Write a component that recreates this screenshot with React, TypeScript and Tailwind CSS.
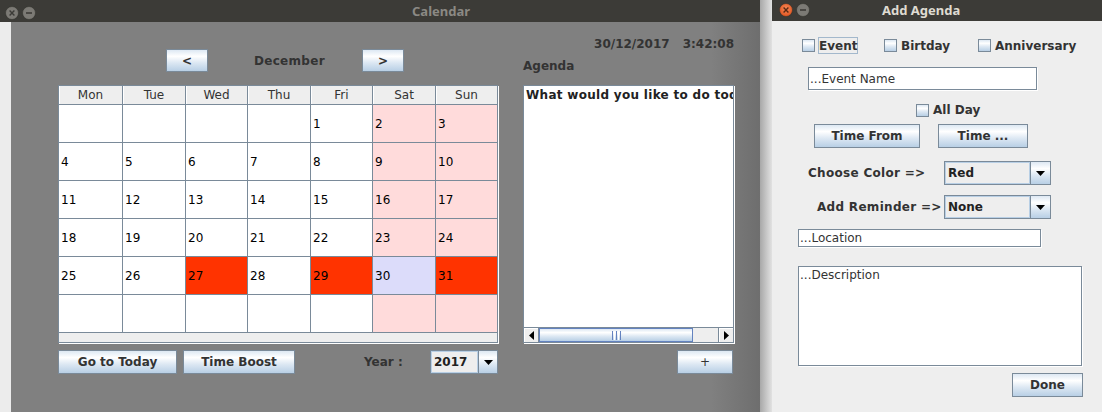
import React from "react";

function Btn({ className = "", children }: { className?: string; children: React.ReactNode }) {
  return (
    <div
      className={`flex shrink-0 items-center justify-center border border-[#7a8a99] bg-[linear-gradient(to_bottom,#dde8f3_0%,#ffffff_30%,#dde8f3_60%,#b8cfe5_100%)] text-[12px] leading-[14px] text-[#333333] ${className}`}
    >
      {children}
    </div>
  );
}

function Box() {
  return (
    <div className="h-[13px] w-[13px] shrink-0 border border-[#7a8a99] bg-[linear-gradient(to_bottom,#dde8f3_0%,#ffffff_30%,#dde8f3_60%,#b8cfe5_100%)]" />
  );
}

function DownArrow() {
  return (
    <svg width="9" height="5" viewBox="0 0 9 5">
      <polygon points="0,0 9,0 4.5,5" fill="#000000" />
    </svg>
  );
}

function Combo({ value, className = "", arrowW = "w-[19px]" }: { value: string; className?: string; arrowW?: string }) {
  return (
    <div className={`flex shrink-0 border border-[#7a8a99] ${className}`}>
      <div className="flex flex-1 items-center border border-[#b8cfe5] bg-[#eeeeee] pl-[2px] text-[12px] font-bold leading-[14px] text-[#222222]">
        {value}
      </div>
      <div
        className={`flex items-center justify-center border-l border-[#7a8a99] bg-[linear-gradient(to_bottom,#dde8f3_0%,#ffffff_30%,#dde8f3_60%,#b8cfe5_100%)] ${arrowW}`}
      >
        <DownArrow />
      </div>
    </div>
  );
}

function WinBtn({ kind, orange }: { kind: "close" | "min"; orange?: boolean }) {
  return (
    <svg width="14" height="14" viewBox="0 0 14 14" className="shrink-0">
      <defs>
        <radialGradient id="og" cx="50%" cy="40%" r="60%">
          <stop offset="0%" stopColor="#f58a5a" />
          <stop offset="100%" stopColor="#e2541f" />
        </radialGradient>
      </defs>
      <circle cx="7" cy="7" r="6.5" fill={orange ? "url(#og)" : "#7c7a75"} stroke="#33322e" strokeWidth="0.6" />
      {kind === "close" ? (
        <path d="M4.6 4.6 L9.4 9.4 M9.4 4.6 L4.6 9.4" stroke={orange ? "#5a2a14" : "#3c3b37"} strokeWidth="1.4" />
      ) : (
        <path d="M4 7 H10" stroke="#3c3b37" strokeWidth="1.6" />
      )}
    </svg>
  );
}

const weeks: (number | null)[][] = [
  [null, null, null, null, 1, 2, 3],
  [4, 5, 6, 7, 8, 9, 10],
  [11, 12, 13, 14, 15, 16, 17],
  [18, 19, 20, 21, 22, 23, 24],
  [25, 26, 27, 28, 29, 30, 31],
  [null, null, null, null, null, null, null],
];

function cellBg(d: number | null, col: number) {
  if (d === 27 || d === 29 || d === 31) return "bg-[#ff3300]";
  if (d === 30) return "bg-[#dcdcfa]";
  if (col >= 5) return "bg-[#ffdbdb]";
  return "bg-white";
}

function Calendar() {
  const heads = ["Mon", "Tue", "Wed", "Thu", "Fri", "Sat", "Sun"];
  return (
    <div className="flex h-[258px] w-[440px] flex-col border border-[#7a8a99] bg-[#eeeeee] shadow-[1px_1px_0_0_#ffffff]">
      <div className="grid grid-cols-[63px_62px_61px_62px_61px_62px_61px] grid-rows-[18px_repeat(6,37px)] gap-px border-b border-[#7a8a99] bg-[#7a8a99]">
        {heads.map((h) => (
          <div
            key={h}
            className="flex items-center justify-center bg-[#eeeeee] text-[12px] leading-[14px] text-[#333333] shadow-[inset_1px_0_0_#ffffff]"
          >
            {h}
          </div>
        ))}
        {weeks.map((w, ri) =>
          w.map((d, ci) => (
            <div
              key={`${ri}-${ci}`}
              className={`flex items-center pl-[2px] text-[12px] leading-[14px] text-black ${cellBg(d, ci)}`}
            >
              {d ?? ""}
            </div>
          ))
        )}
      </div>
    </div>
  );
}

function AgendaArea() {
  return (
    <div className="flex h-[258px] w-[211px] flex-col border border-[#7a8a99] bg-white shadow-[1px_1px_0_0_#ffffff]">
      <div className="flex-1 overflow-hidden whitespace-nowrap pl-[2px] pt-[2px] text-[12px] font-bold leading-[14px] tracking-[0.3px] text-[#222222]">
        What would you like to do today?
      </div>
      <div className="flex h-[15px] border-t border-[#7a8a99] bg-[#eeeeee]">
        <div className="flex w-[15px] items-center justify-center border-r border-[#7a8a99] bg-[#eeeeee] shadow-[inset_1px_1px_0_#ffffff]">
          <svg width="5" height="9" viewBox="0 0 5 9">
            <polygon points="5,0 5,9 0,4.5" fill="#000000" />
          </svg>
        </div>
        <div className="flex w-[154px] items-center justify-center border border-[#6382bf] bg-[linear-gradient(to_bottom,#dde8f3_0%,#ffffff_30%,#dde8f3_60%,#b8cfe5_100%)]">
          <div className="flex h-[9px] gap-[1px]">
            <div className="w-[1px] bg-[#6382bf]" />
            <div className="w-[1px] bg-white" />
            <div className="w-[1px] bg-[#6382bf]" />
            <div className="w-[1px] bg-white" />
            <div className="w-[1px] bg-[#6382bf]" />
          </div>
        </div>
        <div className="flex-1" />
        <div className="flex w-[15px] items-center justify-center border-l border-[#7a8a99] bg-[#eeeeee] shadow-[inset_1px_1px_0_#ffffff]">
          <svg width="5" height="9" viewBox="0 0 5 9">
            <polygon points="0,0 0,9 5,4.5" fill="#000000" />
          </svg>
        </div>
      </div>
    </div>
  );
}

function Field({ className = "", text, top = false }: { className?: string; text: string; top?: boolean }) {
  return (
    <div
      className={`flex shrink-0 border border-[#7a8a99] bg-white pl-[1px] text-[12px] leading-[14px] text-[#333333] shadow-[1px_1px_0_0_#ffffff] ${top ? "items-start pt-[1px] pl-0" : "items-center"} ${className}`}
    >
      {text}
    </div>
  );
}

export default function App() {
  const label = "text-[12px] font-bold leading-[14px] text-[#333333]";
  return (
    <div className="flex h-[412px] w-[1102px] overflow-hidden font-['DejaVu_Sans',sans-serif]">
      {/* Main window */}
      <div className="flex w-[760px] shrink-0 flex-col">
        <div className="flex h-[22px] shrink-0 items-center bg-[#3c3b37] pl-[5px]">
          <div className="mt-[3px] flex gap-[3px]">
            <WinBtn kind="close" />
            <WinBtn kind="min" />
          </div>
          <div className="ml-[376px] font-['Noto_Sans',sans-serif] text-[13px] font-bold leading-[16px] text-[#8b8984]">
            Calendar
          </div>
        </div>
        <div className="flex flex-1">
          <div className="w-[11px] shrink-0 bg-[#ececec]" />
          <div className="flex flex-1 bg-[linear-gradient(to_right,#808080_0px,#808080_700px,#6e6e6e_100%)] pl-[47px]">
            {/* Calendar column */}
            <div className="flex w-[440px] shrink-0 flex-col">
              <div className="mt-[27px] flex h-[23px] items-center">
                <Btn className="ml-[108px] h-[23px] w-[42px] font-bold">&lt;</Btn>
                <div className={`ml-[46px] w-[108px] tracking-[0.3px] ${label}`}>December</div>
                <Btn className="h-[23px] w-[42px] font-bold">&gt;</Btn>
              </div>
              <div className="mt-[13px]">
                <Calendar />
              </div>
              <div className="mt-[7px] flex h-[24px] items-center">
                <Btn className="h-[24px] w-[119px] font-bold">Go to Today</Btn>
                <Btn className="ml-[6px] h-[24px] w-[112px] font-bold">Time Boost</Btn>
                <div className={`ml-[69px] ${label}`}>Year :</div>
                <Combo value="2017" className="ml-auto h-[24px] w-[68px]" />
              </div>
            </div>
            {/* Agenda column */}
            <div className="ml-[25px] flex w-[212px] shrink-0 flex-col">
              <div className={`mt-[15px] flex h-[14px] justify-end gap-[13px] pr-[1px] ${label}`}>
                <span>30/12/2017</span>
                <span>3:42:08</span>
              </div>
              <div className={`mt-[8px] h-[14px] ${label}`}>Agenda</div>
              <div className="mt-[12px]">
                <AgendaArea />
              </div>
              <div className="mt-[7px] flex justify-end pr-[2px]">
                <Btn className="h-[24px] w-[56px]">+</Btn>
              </div>
            </div>
          </div>
        </div>
      </div>

      {/* Shadow strip */}
      <div className="w-[12px] shrink-0 bg-[linear-gradient(to_right,#a8a8a8,#e2e2e2)]" />

      {/* Add Agenda dialog */}
      <div className="flex w-[330px] shrink-0 flex-col bg-[#eeeeee]">
        <div className="flex h-[21px] shrink-0 items-center bg-[#3c3b37] pb-[2px] pl-[7px]">
          <div className="flex gap-[3px]">
            <WinBtn kind="close" orange />
            <WinBtn kind="min" />
          </div>
          <div className="ml-[72px] font-['Noto_Sans',sans-serif] text-[13px] font-bold leading-[16px] text-[#dfdbd2]">
            Add Agenda
          </div>
        </div>

        <div className="mt-[16px] flex h-[17px] items-center pl-[30px]">
          <div className="flex w-[82px] items-center">
            <Box />
            <div className={`ml-[3px] flex h-[17px] items-center border border-[#a3b8cc] ${label}`}>Event</div>
          </div>
          <div className="flex w-[94px] items-center">
            <Box />
            <div className={`ml-[4px] ${label}`}>Birtday</div>
          </div>
          <div className="flex items-center">
            <Box />
            <div className={`ml-[4px] ${label}`}>Anniversary</div>
          </div>
        </div>

        <Field className="ml-[36px] mt-[13px] h-[23px] w-[229px]" text="...Event Name" />

        <div className="mt-[12px] flex h-[16px] items-center pl-[144px]">
          <Box />
          <div className={`ml-[4px] ${label}`}>All Day</div>
        </div>

        <div className="mt-[6px] flex pl-[42px]">
          <Btn className="h-[24px] w-[106px] font-bold">Time From</Btn>
          <Btn className="ml-[18px] h-[24px] w-[90px] font-bold">Time ...</Btn>
        </div>

        <div className="mt-[13px] flex h-[24px] items-center pl-[36px]">
          <div className={`w-[136px] tracking-[0.3px] ${label}`}>Choose Color =&gt;</div>
          <Combo value="Red" className="h-[24px] w-[107px]" arrowW="w-[20px]" />
        </div>

        <div className="mt-[10px] flex h-[24px] items-center pl-[45px]">
          <div className={`w-[127px] tracking-[0.3px] ${label}`}>Add Reminder =&gt;</div>
          <Combo value="None" className="h-[24px] w-[107px]" arrowW="w-[20px]" />
        </div>

        <Field className="ml-[26px] mt-[10px] h-[18px] w-[243px]" text="...Location" />

        <Field className="ml-[26px] mt-[19px] h-[100px] w-[284px]" text="...Description" top />

        <div className="mt-[7px] flex pl-[240px]">
          <Btn className="h-[24px] w-[71px] font-bold">Done</Btn>
        </div>
      </div>
    </div>
  );
}
